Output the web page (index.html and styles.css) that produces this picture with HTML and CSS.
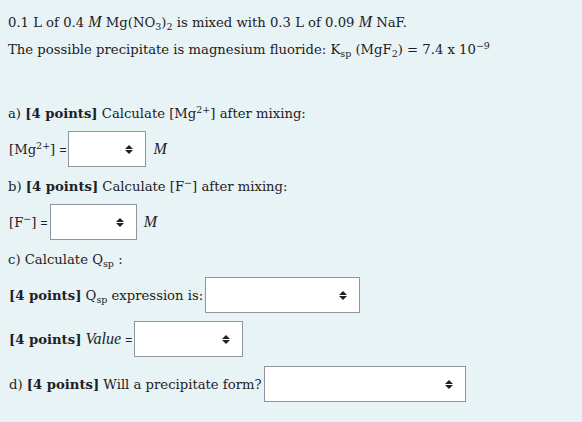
FILE: index.html
```html
<!DOCTYPE html>
<html>
<head>
<meta charset="utf-8">
<link rel="stylesheet" href="styles.css">
</head>
<body>
<div class="page">
  <p class="intro">0.1 L of 0.4 <i class="m">M</i> Mg(NO<sub>3</sub>)<sub>2</sub> is mixed with 0.3 L of 0.09 <i class="m">M</i> NaF.</p>
  <p class="intro">The possible precipitate is magnesium fluoride: K<sub>sp</sub> (MgF<sub>2</sub>) = 7.4 x 10<sup>−9</sup></p>

  <div class="row q-a"><span>a) <b>[4 points]</b> Calculate [Mg<sup>2+</sup>] after mixing:</span></div>
  <div class="row ans">
    <span class="lbl">[Mg<sup>2+</sup>] <span class="eq">=</span></span>
    <span class="sel w-mg"><span class="arrows"></span></span>
    <i class="m unit">M</i>
  </div>

  <div class="row q"><span>b) <b>[4 points]</b> Calculate [F<sup>−</sup>] after mixing:</span></div>
  <div class="row ans">
    <span class="lbl">[F<sup>−</sup>] <span class="eq">=</span></span>
    <span class="sel w-f"><span class="arrows"></span></span>
    <i class="m unit">M</i>
  </div>

  <div class="row q"><span>c) Calculate Q<sub>sp</sub>&nbsp;:</span></div>
  <div class="row ans">
    <span class="lbl"><b>[4 points]</b> Q<sub>sp</sub> expression is:</span>
    <span class="sel w-q"><span class="arrows"></span></span>
  </div>
  <div class="row ans gap">
    <span class="lbl"><b>[4 points]</b> <i class="m">Value</i> <span class="eq">=</span></span>
    <span class="sel w-v"><span class="arrows"></span></span>
  </div>
  <div class="row ans gap2">
    <span class="lbl">d) <b>[4 points]</b> Will a precipitate form?</span>
    <span class="sel w-d"><span class="arrows"></span></span>
  </div>
</div>
</body>
</html>
```

FILE: styles.css
```css
html, body {
  margin: 0;
  padding: 0;
  background: #e7f3f5;
}
body {
  font-family: "DejaVu Serif", "Liberation Serif", serif;
  font-size: 13.2px;
  color: #1d2125;
  width: 582px;
  height: 422px;
  overflow: hidden;
}
.page {
  padding: 8px 8px 0 8px;
  display: flex;
  flex-direction: column;
}
.intro {
  margin: 0;
  height: 28px;
  line-height: 28px;
  white-space: nowrap;
}
sub, sup {
  font-size: 0.72em;
  line-height: 0;
}
sup { vertical-align: 0.55em; }
sub { vertical-align: -0.3em; }
.m {
  font-family: "Liberation Serif", serif;
  font-style: italic;
  font-size: 16px;
}
b { font-weight: bold; }
.row {
  height: 36px;
  display: flex;
  align-items: center;
  white-space: nowrap;
}
.q-a { margin-top: 31px; }
.q { margin-top: 1px; }
.ans { margin-top: 0; }
.gap { margin-top: 8px; }
.gap2 { margin-top: 9px; }
.lbl {
  padding-left: 1px;
  margin-right: 2px;
}
.eq {
  font-family: "Liberation Sans", sans-serif;
  font-size: 12px;
}
.sel {
  box-sizing: border-box;
  height: 36px;
  background: #ffffff;
  border: 1px solid #8f959e;
  position: relative;
  display: inline-block;
}
.arrows {
  position: absolute;
  right: 12px;
  top: 50%;
  width: 8px;
  height: 9px;
  margin-top: -4px;
}
.arrows::before, .arrows::after {
  content: "";
  position: absolute;
  left: 0;
  border-left: 4px solid transparent;
  border-right: 4px solid transparent;
}
.arrows::before {
  top: 0;
  border-bottom: 4px solid #1d2125;
}
.arrows::after {
  bottom: 0;
  border-top: 4px solid #1d2125;
}
.unit {
  margin-left: 7px;
  color: #1d2125;
}
.w-mg { width: 78px; }
.w-f { width: 87px; }
.w-q { width: 155px; }
.w-v { width: 109px; }
.w-d { width: 202px; }
```
